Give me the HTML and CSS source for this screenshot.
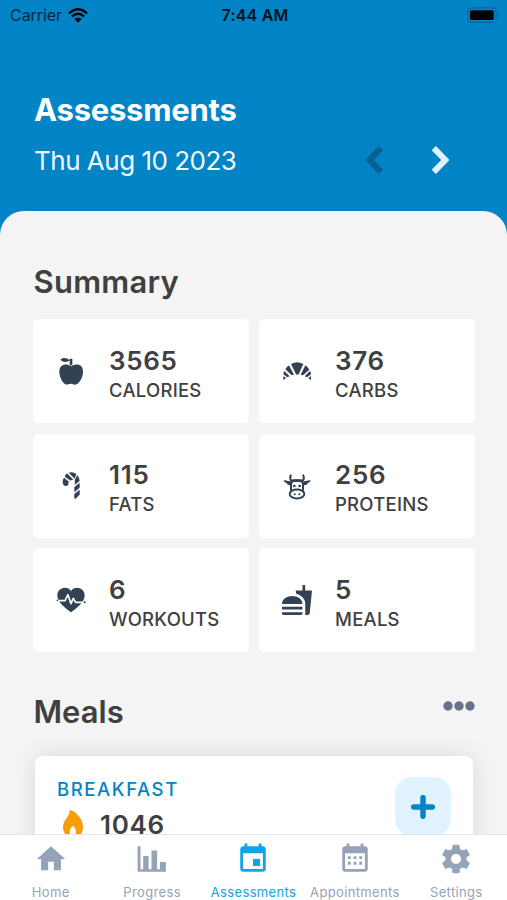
FILE: index.html
```html
<!DOCTYPE html>
<html lang="en">
<head>
<meta charset="utf-8">
<title>Assessments</title>
<link rel="stylesheet" href="styles.css">
</head>
<body>
<div class="app">
  <header class="header">
    <div class="status">
      <div class="carrier"><span>Carrier</span>
        <svg class="wifi" viewBox="0 0 60 45"><g fill="none" stroke="#000" stroke-width="7"><path d="M3 16Q30-9 57 16"/><path d="M12 26Q30 9 48 26"/></g><path d="M19 33Q30 24 41 33L30 44Z"/></svg>
      </div>
      <span class="time">7:44 AM</span>
      <div class="battery-wrap"><svg class="battery" viewBox="0 0 100 50"><rect x="2" y="2" width="86" height="44" rx="11" fill="none" stroke="#05659a" stroke-width="4"/><rect x="9" y="9" width="72" height="30" rx="5"/><path d="M93 18q6 6 0 12z" fill="#05659a"/></svg></div>
    </div>
    <h1 class="title">Assessments</h1>
    <div class="date-row">
      <span class="date">Thu Aug 10 2023</span>
      <div class="arrows">
        <svg class="arrow prev" viewBox="0 0 20 30"><path d="M17 3.200L5.500 15l11.500 11.800"/></svg>
        <svg class="arrow next" viewBox="0 0 20 30"><path d="M3.800 3.200L15.300 15 3.800 26.800"/></svg>
      </div>
    </div>
  </header>
  <main class="sheet">
    <h2 class="heading summary-heading">Summary</h2>
    <section class="grid">
      <div class="card">
        <svg class="icon" viewBox="0 0 90 90"><path d="M45 31c7-5 15-6 22-5 10 2 14 10 14 20 0 14-6 29-15 36-7 6-12 4-17 2-3-1-5-1-8 0-6 2-12 3-18-3C15 73 10 60 10 46c0-10 5-19 15-20 8-1 14 1 20 5z"/><path d="M41 8h8v20h-8zM13 11c7-7 19-7 28 2-8 7-20 6-28-2z"/></svg>
        <div class="info"><span class="value">3565</span><span class="label">CALORIES</span></div>
      </div>
      <div class="card">
        <svg class="icon" viewBox="0 0 90 90"><path d="M27 24q18-11 37 0L50 55q-4 2-8 0zM21 28l15 28-7 2L10 40q4-7 11-12zM70 28q8 5 12 13L63 58l-7-2zM7 45l16 16-7 3-12-9q0-6 3-10zM84 45q3 4 3 10l-12 9-7-3zM4 60l8 6-8 7zM87 60v13l-8-7z"/></svg>
        <div class="info"><span class="value">376</span><span class="label">CARBS</span></div>
      </div>
      <div class="card">
        <svg class="icon" viewBox="0 0 90 90"><path d="M33 7l20 20q-6-3-9 2L26 17q2-6 7-10zM38 5q13-4 23 4l-5 14zM24 20l15 12q-3 4-2 9-8 8-15 0-5-10 2-21zM64 12q6 8 7 18L56 42q2-9 0-14zM71 35v15L55 64V48zM71 56v15L57 85q-4-6-2-16z"/></svg>
        <div class="info"><span class="value">115</span><span class="label">FATS</span></div>
      </div>
      <div class="card">
        <svg class="icon" viewBox="0 0 90 90"><g fill="none" stroke="#334155" stroke-width="6"><path d="M27 59V38q3-10 18-10t18 10v21"/><ellipse cx="45" cy="69" rx="22" ry="13.500"/><path d="M30 31q-9-6-3-20M60 31q9-6 3-20"/></g><path d="M5 28q7-1 13 2l9 1v12q-10 1-14-7-7-1-8-8zM86 28q-7-1-13 2l-9 1v12q10 1 14-7 7-1 8-8z"/><circle cx="37" cy="45" r="4"/><circle cx="53" cy="45" r="4"/><circle cx="38" cy="70" r="3"/><circle cx="52" cy="70" r="3"/><path d="M30 25h30v8H30z"/></svg>
        <div class="info"><span class="value">256</span><span class="label">PROTEINS</span></div>
      </div>
      <div class="card">
        <svg class="icon" viewBox="0 0 90 90"><path d="M45 82C29 70 4 53 4 31 4 9 33 0 45 18 57 0 86 9 86 31c0 22-25 39-41 51z"/><path d="M6 47h21l9-18 9 27 7-16 7 12h25" fill="none" stroke="#fff" stroke-width="5" stroke-linejoin="round"/><circle cx="4" cy="46" r="2.500"/><circle cx="86" cy="52" r="3"/></svg>
        <div class="info"><span class="value">6</span><span class="label">WORKOUTS</span></div>
      </div>
      <div class="card">
        <svg class="icon" viewBox="1 1 22 22"><path d="M18.060 22.990h1.660c.84 0 1.530-.64 1.630-1.460L23 5.050h-5V1h-1.970v4.050h-4.970l.3 2.340c1.710.47 3.310 1.320 4.270 2.260 1.440 1.420 2.430 2.890 2.430 5.290v8.050zM1 21.990V21h15.030v.99c0 .55-.45 1-1.010 1H2.010c-.56 0-1.010-.45-1.010-1zm15.030-7c0-8-15.030-8-15.030 0h15.030zM1.020 17h15v2h-15z"/></svg>
        <div class="info"><span class="value">5</span><span class="label">MEALS</span></div>
      </div>
    </section>
    <div class="meals-head">
      <h2 class="heading">Meals</h2>
      <svg class="dots" viewBox="0 0 32 10"><circle cx="5" cy="5" r="4.700"/><circle cx="16" cy="5" r="4.700"/><circle cx="27" cy="5" r="4.700"/></svg>
    </div>
    <section class="meal">
      <div class="meal-info">
        <span class="meal-name">BREAKFAST</span>
        <div class="meal-cals">
          <svg class="fire" viewBox="0 0 60 84"><path d="M20 0c-1 12-3 16-9 24C4 33 0 41 0 52c0 19 13 31 30 31s30-12 30-31c0-20-10-31-19-41C35 5 28 1 20 0zM30 47c6 6 9 12 9 19 0 8-4 13-9 13s-10-5-10-13c0-7 4-13 10-19z" fill-rule="evenodd"/></svg>
          <span class="value">1046</span>
        </div>
      </div>
      <div class="add"><svg class="plus" viewBox="0 0 24 24"><path d="M12 2.700v18.600M2.700 12h18.600"/></svg></div>
    </section>
  </main>
  <nav class="tabs">
    <div class="tab"><svg viewBox="0 0 24 24"><path d="M10 20v-6h4v6h5v-8h3L12 3 2 12h3v8z"/></svg><span>Home</span></div>
    <div class="tab"><svg viewBox="0 0 34 34"><path d="M2.600 4.300h2.900v22.900h2.700V14.100h5.400v13.100h2.900V8.500h5.600v18.700h2.900v-7.300h5.900v9.800H2.600z"/></svg><span>Progress</span></div>
    <div class="tab active"><svg viewBox="0 0 24 24"><path d="M17 12h-5v5h5v-5zM16 1v2H8V1H6v2H5c-1.110 0-1.990.9-1.990 2L3 19c0 1.100.89 2 2 2h14c1.100 0 2-.9 2-2V5c0-1.100-.9-2-2-2h-1V1h-2zm3 18H5V8h14v11z"/></svg><span>Assessments</span></div>
    <div class="tab"><svg viewBox="0 0 24 24"><path d="M16 1v2H8V1H6v2H5c-1.110 0-2 .9-2 2v14c0 1.100.89 2 2 2h14c1.100 0 2-.9 2-2V5c0-1.100-.9-2-2-2h-1V1h-2zm3 18H5V8h14v11zM7 10h2v2H7zM11 10h2v2h-2zM15 10h2v2h-2zM7 14h2v2H7zM11 14h2v2h-2zM15 14h2v2h-2z"/></svg><span>Appointments</span></div>
    <div class="tab"><svg viewBox="0 0 24 24"><path d="M12,15.500A3.500,3.500 0 0,1 8.500,12A3.500,3.500 0 0,1 12,8.500A3.500,3.500 0 0,1 15.500,12A3.500,3.500 0 0,1 12,15.500M19.430,12.970C19.470,12.650 19.500,12.330 19.500,12C19.500,11.670 19.470,11.340 19.430,11L21.540,9.370C21.730,9.220 21.780,8.950 21.660,8.730L19.660,5.270C19.540,5.050 19.270,4.960 19.050,5.050L16.560,6.050C16.040,5.660 15.500,5.320 14.870,5.070L14.500,2.420C14.460,2.180 14.250,2 14,2H10C9.750,2 9.540,2.180 9.500,2.420L9.130,5.070C8.500,5.320 7.960,5.660 7.440,6.050L4.950,5.050C4.730,4.960 4.460,5.050 4.340,5.270L2.340,8.730C2.210,8.950 2.270,9.220 2.460,9.370L4.570,11C4.530,11.340 4.500,11.670 4.500,12C4.500,12.330 4.530,12.650 4.570,12.970L2.460,14.630C2.270,14.780 2.210,15.050 2.340,15.270L4.340,18.730C4.460,18.950 4.730,19.030 4.950,18.950L7.440,17.940C7.960,18.340 8.500,18.680 9.130,18.930L9.500,21.580C9.540,21.820 9.750,22 10,22H14C14.250,22 14.460,21.820 14.500,21.580L14.870,18.930C15.500,18.670 16.040,18.340 16.560,17.940L19.050,18.950C19.270,19.030 19.540,18.950 19.660,18.730L21.660,15.270C21.780,15.050 21.730,14.780 21.540,14.630L19.430,12.970Z"/></svg><span>Settings</span></div>
  </nav>
</div>
</body>
</html>
```
FILE: styles.css
```css
* { box-sizing: border-box; }
body { margin: 0; font-family: Inter, "Liberation Sans", sans-serif; color: #404040; }
svg { display: block; flex: none; }
.app { width: 507px; height: 900px; overflow: hidden; display: flex; flex-direction: column; background: #0284c7; }
.header { height: 211px; flex: none; color: #fff; }
.status { height: 30px; padding: 0 7px 0 10px; display: grid; grid-template-columns: 1fr auto 1fr; align-items: center; color: #062a40; font-size: 16px; line-height: 30px; }
.carrier { display: flex; align-items: center; gap: 6px; letter-spacing: -0.05px; }
.wifi { width: 20px; height: 15px; }
.time { color: #04121b; font-weight: 600; letter-spacing: 0.2px; }
.battery-wrap { display: flex; justify-content: flex-end; }
.battery { width: 33px; height: 17px; }
.title { margin: 60px 0 0 34px; font-size: 31px; line-height: 40px; font-weight: 700; letter-spacing: -0.25px; }
.date-row { display: flex; align-items: center; justify-content: space-between; height: 60px; padding: 0 57px 0 34px; }
.date { font-size: 26px; color: #f0f9ff; letter-spacing: -0.5px; }
.arrows { display: flex; gap: 46px; }
.arrow { width: 20px; height: 30px; fill: none; stroke-width: 6; }
.prev { stroke: #0a618f; }
.next { stroke: #e0f2fe; }
.sheet { flex: 1; min-height: 0; overflow: hidden; background: #f4f4f4; border-radius: 24px 24px 0 0; padding: 51px 32.500px 0 33px; }
.heading { margin: 0 0 0 0.500px; font-size: 31px; line-height: 40px; font-weight: 600; }
.summary-heading { letter-spacing: 0.25px; }
.grid { margin-top: 17px; display: grid; grid-template-columns: 1fr 1fr; gap: 10.500px; }
.card { height: 104px; background: #fff; border-radius: 5px; display: flex; align-items: center; gap: 23px; padding-left: 23px; }
.icon { width: 30px; height: 30px; fill: #334155; }
.info { display: flex; flex-direction: column; padding-top: 4px; }
.value { font-size: 26px; line-height: 34px; font-weight: 600; letter-spacing: 0.7px; }
.label { font-size: 18.500px; line-height: 25px; font-weight: 500; letter-spacing: 0.25px; }
.meals-head { display: flex; justify-content: space-between; margin-top: 40px; height: 64px; }
.dots { width: 32px; height: 10px; margin-top: 9px; fill: #64748b; }
.meal { margin: 0 1.500px 0 2px; height: 140px; padding: 21px 22px 0; display: flex; justify-content: space-between; background: #fff; border-radius: 8px; box-shadow: 0 0 24px rgba(0,0,0,.11); }
.meal-info { display: flex; flex-direction: column; }
.meal-name { font-size: 18.500px; line-height: 24px; font-weight: 500; letter-spacing: 1.600px; color: #0284c7; }
.meal-cals { display: flex; align-items: flex-start; gap: 17px; padding: 7px 0 0 6px; }
.fire { width: 20px; height: 28px; margin-top: 2px; fill: #f59e0b; }
.add { width: 56px; height: 59px; border-radius: 17px; background: #e0f2fe; display: flex; align-items: center; justify-content: center; }
.plus { width: 24px; height: 24px; fill: none; stroke: #0284c7; stroke-width: 5.500; stroke-linecap: round; }
.tabs { flex: none; height: 66px; background: #fff; border-top: 1px solid #e5e5e5; display: grid; grid-template-columns: repeat(5, 1fr); }
.tab { display: flex; flex-direction: column; align-items: center; color: #94a3b8; padding-top: 7px; }
.tab svg { width: 34px; height: 34px; fill: currentColor; }
.tab span { font-size: 13px; line-height: 16px; margin-top: 8px; letter-spacing: 0.35px; white-space: nowrap; }
.active { color: #0ea5e9; }
```
